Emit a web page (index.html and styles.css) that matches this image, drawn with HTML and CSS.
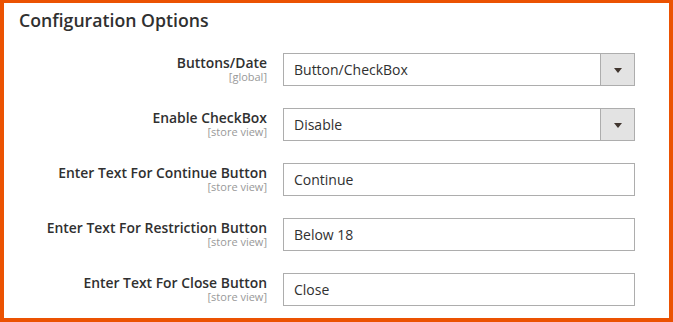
FILE: index.html
```html
<!DOCTYPE html>
<html lang="en">
<head>
<meta charset="utf-8">
<title>Configuration Options</title>
<link rel="stylesheet" href="styles.css">
</head>
<body>
<div class="frame">
  <h2 class="title">Configuration Options</h2>
  <div class="form">
    <div class="label"><span class="name">Buttons/Date</span><span class="scope">[global]</span></div>
    <div class="select"><span class="value">Button/CheckBox</span><span class="arrow"></span></div>

    <div class="label"><span class="name">Enable CheckBox</span><span class="scope">[store view]</span></div>
    <div class="select"><span class="value">Disable</span><span class="arrow"></span></div>

    <div class="label"><span class="name">Enter Text For Continue Button</span><span class="scope">[store view]</span></div>
    <input class="input" type="text" value="Continue">

    <div class="label"><span class="name">Enter Text For Restriction Button</span><span class="scope">[store view]</span></div>
    <input class="input" type="text" value="Below 18">

    <div class="label"><span class="name">Enter Text For Close Button</span><span class="scope">[store view]</span></div>
    <input class="input" type="text" value="Close">
  </div>
</div>
</body>
</html>
```
FILE: styles.css
```css
html, body {
  margin: 0;
  padding: 0;
  background: #fff;
}
body {
  font-family: "Open Sans", "Noto Sans", sans-serif;
  color: #303030;
}
.frame {
  box-sizing: border-box;
  width: 673px;
  height: 322px;
  border-style: solid;
  border-color: #eb5202;
  border-width: 3px 4px 4px 4px;
  padding: 7px 0 0 15px;
  background: #fff;
}
.title {
  margin: 0;
  font-size: 17.7px;
  font-weight: 600;
  line-height: 20px;
  color: #303030;
}
.form {
  margin-top: 23px;
  display: grid;
  grid-template-columns: 248px 352px;
  column-gap: 16px;
  row-gap: 22px;
}
.label {
  display: flex;
  flex-direction: column;
  align-items: flex-end;
  text-align: right;
  padding-top: 2px;
}
.name {
  font-size: 13.9px;
  font-weight: 600;
  line-height: 16px;
}
.scope {
  font-size: 11px;
  line-height: 11px;
  color: #999;
}
.select, .input {
  box-sizing: border-box;
  height: 33px;
  border: 1px solid #adadad;
  background: #fff;
  font-family: "Open Sans", "Noto Sans", sans-serif;
  font-size: 14px;
  color: #303030;
}
.input {
  width: 352px;
  margin: 0;
  padding: 0 10px;
  outline: none;
}
.select {
  display: flex;
  align-items: stretch;
}
.value {
  flex: 1;
  padding-left: 10px;
  line-height: 31px;
}
.arrow {
  width: 33px;
  border-left: 1px solid #adadad;
  background: #e3e3e3;
  display: flex;
  align-items: center;
  justify-content: center;
}
.arrow::before {
  content: "";
  width: 0;
  height: 0;
  border-left: 4px solid transparent;
  border-right: 4px solid transparent;
  border-top: 5px solid #41362f;
  margin-top: 1px;
}
```
